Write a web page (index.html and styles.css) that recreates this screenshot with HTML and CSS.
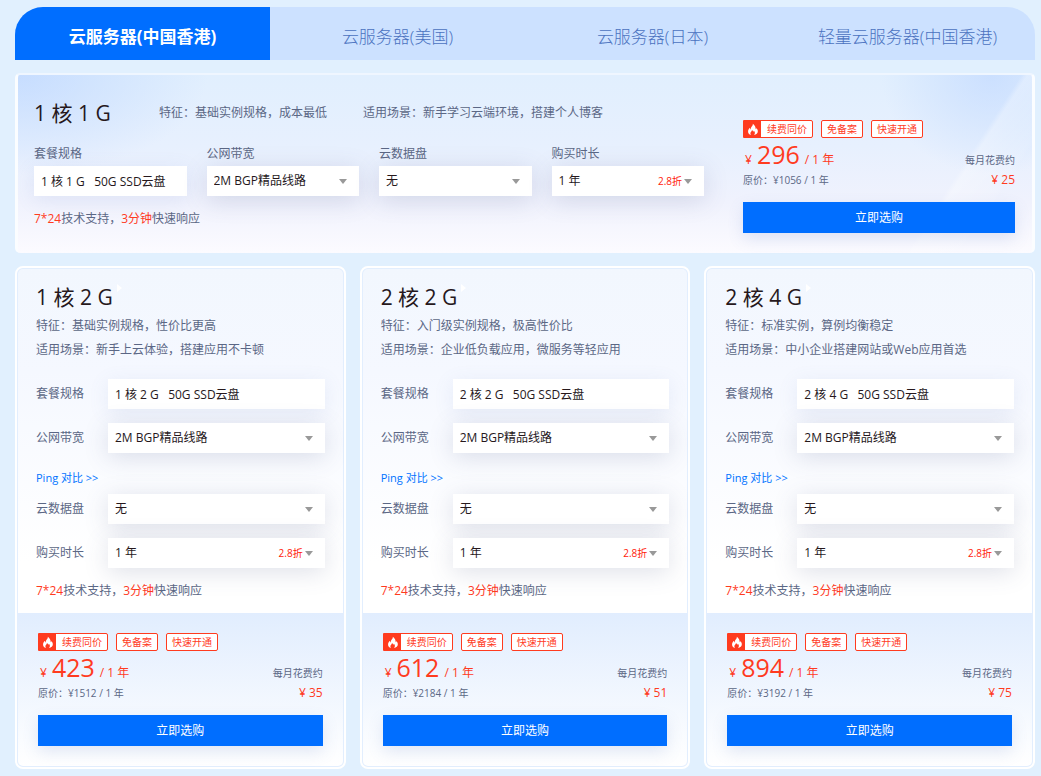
FILE: index.html
```html
<!DOCTYPE html>
<html lang="zh-CN">
<head>
<meta charset="utf-8">
<meta name="viewport" content="width=device-width, initial-scale=1">
<title>云服务器</title>
<link rel="stylesheet" href="styles.css">
</head>
<body>
<svg class="sprite" aria-hidden="true">
  <symbol id="fire" viewBox="0 0 18 18">
    <path fill="#fff" d="M9.4 3C9.6 4.9 8 6 7.3 7.6 7 8.3 7 9 7.1 9.700 6.400 9.300 6.200 8.500 6.200 7.700 4.800 8.900 4 10.300 4 11.800 4 13.700 5.200 15.100 7.200 15.700 6.600 14.900 6.400 14 6.800 13 7.200 12 8.200 11.300 8.500 10 9.400 10.600 9.800 11.300 9.800 12.200 10.300 11.900 10.500 11.500 10.600 11 11.600 12 11.900 13.200 11.500 14.400 11.300 15 11 15.400 10.600 15.700 13.200 15.200 15 13.700 15 11.400 15 9.800 14.200 8.800 13.500 7.800 13.500 8.500 13.200 9.100 12.600 9.400 12.700 6.800 11.600 4.500 9.400 3Z"/>
  </symbol>
</svg>
<main class="page">
  <nav class="tabs">
    <button class="tab tab-active" type="button">云服务器(中国香港)</button>
    <button class="tab" type="button">云服务器(美国)</button>
    <button class="tab" type="button">云服务器(日本)</button>
    <button class="tab" type="button">轻量云服务器(中国香港)</button>
  </nav>

  <section class="featured">
    <div class="featured-main">
      <header class="featured-head">
        <h2 class="title">1 核 1 G</h2>
        <p class="desc">特征：基础实例规格，成本最低</p>
        <p class="desc">适用场景：新手学习云端环境，搭建个人博客</p>
      </header>
      <div class="featured-fields">
        <div class="stack"><label class="label" for="a1">套餐规格</label><input class="control" id="a1" readonly value="1 核 1 G   50G SSD云盘"></div>
        <div class="stack"><label class="label" for="a2">公网带宽</label><div class="picker"><select class="control" id="a2"><option>2M BGP精品线路</option></select></div></div>
        <div class="stack"><label class="label" for="a3">云数据盘</label><div class="picker"><select class="control" id="a3"><option>无</option></select></div></div>
        <div class="stack"><label class="label" for="a4">购买时长</label><div class="picker"><select class="control" id="a4"><option>1 年</option></select><span class="discount">2.8折</span></div></div>
      </div>
      <p class="support"><em>7*24</em>技术支持，<em>3分钟</em>快速响应</p>
    </div>
    <div class="offer">
      <div class="badges"><span class="badge badge-hot"><svg class="fire"><use href="#fire"/></svg>续费同价</span><span class="badge">免备案</span><span class="badge">快速开通</span></div>
      <div class="prices">
        <div><p class="price">¥ <strong>296</strong> / 1 年</p><p class="original">原价：¥1056 / 1 年</p></div>
        <div class="monthly"><p>每月花费约</p><p class="monthly-price">¥ 25</p></div>
      </div>
      <button class="buy" type="button">立即选购</button>
    </div>
  </section>

  <div class="cards">
    <section class="card">
      <div class="card-body">
        <h2 class="title title-mark">1 核 2 G</h2>
        <p class="desc">特征：基础实例规格，性价比更高</p>
        <p class="desc">适用场景：新手上云体验，搭建应用不卡顿</p>
        <div class="fields">
          <div class="row"><label class="label" for="b1">套餐规格</label><input class="control" id="b1" readonly value="1 核 2 G   50G SSD云盘"></div>
          <div class="row"><label class="label" for="b2">公网带宽</label><div class="picker"><select class="control" id="b2"><option>2M BGP精品线路</option></select></div></div>
          <a class="ping" href="#">Ping 对比 &gt;&gt;</a>
          <div class="row"><label class="label" for="b3">云数据盘</label><div class="picker"><select class="control" id="b3"><option>无</option></select></div></div>
          <div class="row"><label class="label" for="b4">购买时长</label><div class="picker"><select class="control" id="b4"><option>1 年</option></select><span class="discount">2.8折</span></div></div>
        </div>
        <p class="support"><em>7*24</em>技术支持，<em>3分钟</em>快速响应</p>
      </div>
      <div class="offer card-foot">
        <div class="badges"><span class="badge badge-hot"><svg class="fire"><use href="#fire"/></svg>续费同价</span><span class="badge">免备案</span><span class="badge">快速开通</span></div>
        <div class="prices">
          <div><p class="price">¥ <strong>423</strong> / 1 年</p><p class="original">原价：¥1512 / 1 年</p></div>
          <div class="monthly"><p>每月花费约</p><p class="monthly-price">¥ 35</p></div>
        </div>
        <button class="buy" type="button">立即选购</button>
      </div>
    </section>

    <section class="card">
      <div class="card-body">
        <h2 class="title title-mark">2 核 2 G</h2>
        <p class="desc">特征：入门级实例规格，极高性价比</p>
        <p class="desc">适用场景：企业低负载应用，微服务等轻应用</p>
        <div class="fields">
          <div class="row"><label class="label" for="c1">套餐规格</label><input class="control" id="c1" readonly value="2 核 2 G   50G SSD云盘"></div>
          <div class="row"><label class="label" for="c2">公网带宽</label><div class="picker"><select class="control" id="c2"><option>2M BGP精品线路</option></select></div></div>
          <a class="ping" href="#">Ping 对比 &gt;&gt;</a>
          <div class="row"><label class="label" for="c3">云数据盘</label><div class="picker"><select class="control" id="c3"><option>无</option></select></div></div>
          <div class="row"><label class="label" for="c4">购买时长</label><div class="picker"><select class="control" id="c4"><option>1 年</option></select><span class="discount">2.8折</span></div></div>
        </div>
        <p class="support"><em>7*24</em>技术支持，<em>3分钟</em>快速响应</p>
      </div>
      <div class="offer card-foot">
        <div class="badges"><span class="badge badge-hot"><svg class="fire"><use href="#fire"/></svg>续费同价</span><span class="badge">免备案</span><span class="badge">快速开通</span></div>
        <div class="prices">
          <div><p class="price">¥ <strong>612</strong> / 1 年</p><p class="original">原价：¥2184 / 1 年</p></div>
          <div class="monthly"><p>每月花费约</p><p class="monthly-price">¥ 51</p></div>
        </div>
        <button class="buy" type="button">立即选购</button>
      </div>
    </section>

    <section class="card">
      <div class="card-body">
        <h2 class="title title-mark">2 核 4 G</h2>
        <p class="desc">特征：标准实例，算例均衡稳定</p>
        <p class="desc">适用场景：中小企业搭建网站或Web应用首选</p>
        <div class="fields">
          <div class="row"><label class="label" for="d1">套餐规格</label><input class="control" id="d1" readonly value="2 核 4 G   50G SSD云盘"></div>
          <div class="row"><label class="label" for="d2">公网带宽</label><div class="picker"><select class="control" id="d2"><option>2M BGP精品线路</option></select></div></div>
          <a class="ping" href="#">Ping 对比 &gt;&gt;</a>
          <div class="row"><label class="label" for="d3">云数据盘</label><div class="picker"><select class="control" id="d3"><option>无</option></select></div></div>
          <div class="row"><label class="label" for="d4">购买时长</label><div class="picker"><select class="control" id="d4"><option>1 年</option></select><span class="discount">2.8折</span></div></div>
        </div>
        <p class="support"><em>7*24</em>技术支持，<em>3分钟</em>快速响应</p>
      </div>
      <div class="offer card-foot">
        <div class="badges"><span class="badge badge-hot"><svg class="fire"><use href="#fire"/></svg>续费同价</span><span class="badge">免备案</span><span class="badge">快速开通</span></div>
        <div class="prices">
          <div><p class="price">¥ <strong>894</strong> / 1 年</p><p class="original">原价：¥3192 / 1 年</p></div>
          <div class="monthly"><p>每月花费约</p><p class="monthly-price">¥ 75</p></div>
        </div>
        <button class="buy" type="button">立即选购</button>
      </div>
    </section>
  </div>
</main>
</body>
</html>
```

FILE: styles.css
```css
* { box-sizing: border-box; }

body {
  margin: 0;
  background: #e1f0fe;
  color: #5b6785;
  font: 12px/20px "Open Sans", "Noto Sans CJK SC", sans-serif;
}

h2, p { margin: 0; }
em { font-style: normal; color: #ff3b1f; }
button, input, select { font: inherit; }
.sprite { display: none; }

.page { padding: 7px 6px 7px 15px; }

/* Tabs */
.tabs {
  display: grid;
  grid-template-columns: repeat(4, 1fr);
  overflow: hidden;
  border-radius: 28px 28px 0 0;
  background: #cce1ff;
}
.tab {
  height: 53px;
  padding: 6px 0 0;
  border: 0;
  background: none;
  color: #4a72c0;
  font-size: 17px;
  font-weight: 300;
  cursor: pointer;
}
.tab-active {
  background: #006eff;
  color: #fff;
  font-weight: 700;
}

/* Shared pieces */
.title {
  color: #26181c;
  font-size: 21px;
  font-weight: 400;
  line-height: 26px;
}
.title-mark {
  display: flex;
  align-items: flex-start;
  gap: 4px;
  margin-bottom: 4px;
}
.title-mark::after {
  content: "";
  border: 4px solid transparent;
  border-left: 5px solid #fff;
  border-right: 0;
}
.desc { line-height: 24px; }
.control {
  display: block;
  width: 100%;
  min-width: 0;
  height: 30px;
  margin: 0;
  padding: 0 7px;
  border: 0;
  border-radius: 0;
  outline: 0;
  appearance: none;
  background: #fff;
  box-shadow: 0 4px 20px rgba(95, 125, 190, 0.12);
  color: #26181c;
}
.picker {
  position: relative;
  flex: 1;
}
.picker .control { box-shadow: 0 4px 24px rgba(70, 85, 125, 0.18); }
.picker::after {
  content: "";
  position: absolute;
  top: 13px;
  right: 12px;
  border: 4px solid transparent;
  border-top: 5px solid #999;
  border-bottom: 0;
  pointer-events: none;
}
.discount {
  position: absolute;
  top: 5px;
  right: 22px;
  color: #ff1a0a;
  font-size: 10px;
  pointer-events: none;
}

/* Featured plan */
.featured {
  display: grid;
  grid-template-columns: 1fr 272px;
  gap: 39px;
  margin-top: 13px;
  padding: 25px 17px 20px 16px;
  border: 3px solid #fbfdff;
  border-top: 2px solid #eff6ff;
  border-bottom: 0;
  border-radius: 5px;
  background:
    linear-gradient(123deg, transparent 60%, rgba(255, 255, 255, 0.3) 62%, rgba(255, 255, 255, 0.1) 76%, transparent 78%) right top / 200px 100% no-repeat,
    radial-gradient(ellipse 110px 100px at 96% 0, rgba(198, 220, 255, 0.8), transparent),
    radial-gradient(ellipse 190px 100px at 0 0, rgba(190, 215, 255, 0.75), transparent),
    linear-gradient(#e1effe 0, #e7f0fe 40%, #f0f2fd 72%, #fcfbff 100%);
}
.featured-head {
  display: flex;
  align-items: center;
}
.featured-head .title { flex: 0 0 125px; }
.featured-head .desc + .desc { margin-left: 36px; }
.featured-fields {
  display: grid;
  grid-template-columns: repeat(4, 1fr);
  gap: 20px;
  margin: 18px 0 13px;
}
.stack {
  display: flex;
  flex-direction: column;
  gap: 2px;
}
.featured .offer { padding-top: 20px; }

/* Plan cards */
.cards {
  display: grid;
  grid-template-columns: repeat(3, 1fr);
  gap: 14px;
  margin-top: 13px;
}
.card {
  padding: 1px;
  overflow: hidden;
  border: 2px solid #fff;
  border-radius: 8px;
  background: #e2eefe;
}
.card-body {
  padding: 15px 18px 12px;
  border-radius: 5px 5px 0 0;
  background: linear-gradient(#f2f7fe, #f5f8ff 30%, #fff 85%);
}
.fields { margin: 17px 0 13px; }
.row {
  display: grid;
  grid-template-columns: 72px 1fr;
  align-items: center;
}
.row + .row { margin-top: 14px; }
.ping {
  display: block;
  margin: 15px 0 6px;
  color: #0073ff;
  font-size: 11px;
  text-decoration: none;
}

/* Price block */
.card-foot {
  padding: 20px;
  border-radius: 0 0 5px 5px;
  background: linear-gradient(#e1edfe, #fff);
}
.badges {
  display: flex;
  gap: 8px;
}
.badge {
  height: 18px;
  padding: 0 5px;
  border: 1px solid #ff3b1f;
  border-radius: 2px;
  background: #fff;
  color: #ff3b1f;
  font-size: 10px;
  line-height: 16px;
  white-space: nowrap;
}
.badge-hot {
  display: flex;
  gap: 6px;
  padding-left: 0;
  border-radius: 0 2px 2px 0;
}
.fire {
  width: 17px;
  height: 16px;
  background: #ff3b1f;
}
.prices {
  display: flex;
  justify-content: space-between;
  align-items: flex-end;
  padding-bottom: 12px;
}
.price {
  display: flex;
  align-items: baseline;
  gap: 5px;
  height: 32px;
  padding-left: 2px;
  color: #ff3b1f;
}
.price strong {
  font-size: 25px;
  font-weight: 400;
  line-height: 32px;
}
.original {
  font-size: 10px;
}
.monthly {
  font-size: 10px;
  text-align: right;
}
.monthly-price {
  color: #ff3b1f;
  font-size: 12px;
}
.buy {
  display: block;
  width: 100%;
  height: 31px;
  padding: 0;
  border: 0;
  background: #006eff;
  box-shadow: 0 6px 16px rgba(90, 120, 190, 0.16);
  color: #fff;
  cursor: pointer;
}
```
